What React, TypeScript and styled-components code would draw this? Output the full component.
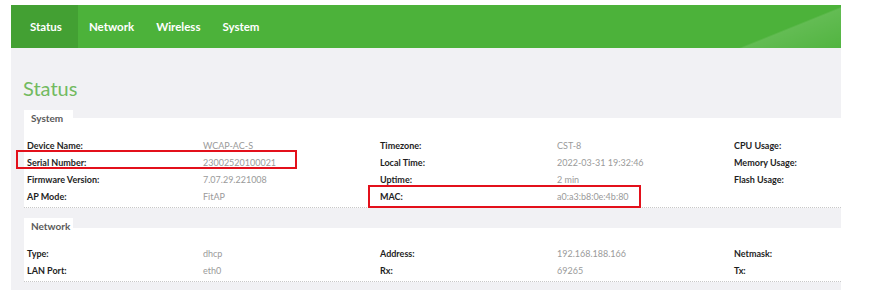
import React from "react";
import styled, { createGlobalStyle } from "styled-components";

const Global = createGlobalStyle`
  html, body { margin: 0; padding: 0; background: #ffffff; }
  body { font-family: Lato, "Open Sans", "Liberation Sans", sans-serif; }
`;

const Page = styled.div`
  position: relative;
  width: 830px;
  margin: 5px 0 0 11px;
  height: 285px;
  background: #f1f1f4;
  overflow: hidden;
`;

const Header = styled.nav`
  display: flex;
  align-items: stretch;
  height: 43px;
  background: linear-gradient(158deg, rgba(255,255,255,0) 89%, rgba(255,255,255,0.13) 89.5%, rgba(255,255,255,0.03) 100%), #4cb23a;
`;

const NavItem = styled.div<{ $active?: boolean }>`
  display: flex;
  align-items: center;
  padding-left: ${(p) => (p.$active ? "19px" : "11px")};
  padding-right: ${(p) => (p.$active ? "16px" : "11px")};
  background: ${(p) => (p.$active ? "#43a033" : "transparent")};
  color: #ffffff;
  font-size: 11.5px;
  font-weight: 700;
`;

const Content = styled.div`
  padding: 28px 0 0 13px;
`;

const Title = styled.h1`
  margin: 0 0 10px -1px;
  font-size: 20px;
  line-height: 24px;
  font-weight: 400;
  color: #72ba60;
`;

const Section = styled.section`
  margin-bottom: 10px;
`;

const SectionHead = styled.div`
  display: flex;
  height: 18px;
`;

const Tab = styled.div`
  width: 42px;
  background: #ffffff;
  padding-left: 7px;
  font-size: 10px;
  font-weight: 700;
  color: #5a5a5a;
  line-height: 17px;
`;

const Filler = styled.div<{ $cut: number }>`
  flex: 1;
  background: linear-gradient(to bottom, transparent ${(p) => p.$cut}px, #ffffff ${(p) => p.$cut}px);
`;

const Body = styled.div`
  background: #ffffff;
  padding: 9px 0 2px 3px;
  border-bottom: 1px dotted #c8c8c8;
`;

const Row = styled.div`
  display: grid;
  grid-template-columns: 176px 177px 177px 177px 177px auto;
  height: 17px;
  align-items: center;
  font-size: 9px;
  white-space: nowrap;
`;

const Label = styled.span`
  font-weight: 700;
  color: #1e1e1e;
`;

const Value = styled.span`
  color: #9a9a9a;
`;

const Mark = styled.div`
  position: absolute;
  border: 2px solid #e3101b;
  box-sizing: border-box;
  pointer-events: none;
`;

type Cell = [string, string];

const sysRows: Cell[][] = [
  [["Device Name:", "WCAP-AC-S"], ["Timezone:", "CST-8"], ["CPU Usage:", ""]],
  [["Serial Number:", "23002520100021"], ["Local Time:", "2022-03-31 19:32:46"], ["Memory Usage:", ""]],
  [["Firmware Version:", "7.07.29.221008"], ["Uptime:", "2 min"], ["Flash Usage:", ""]],
  [["AP Mode:", "FitAP"], ["MAC:", "a0:a3:b8:0e:4b:80"], ["", ""]],
];

const netRows: Cell[][] = [
  [["Type:", "dhcp"], ["Address:", "192.168.188.166"], ["Netmask:", ""]],
  [["LAN Port:", "eth0"], ["Rx:", "69265"], ["Tx:", ""]],
];

function Table({ rows }: { rows: Cell[][] }) {
  return (
    <Body>
      {rows.map((r, i) => (
        <Row key={i}>
          {r.map(([l, v], j) => (
            <React.Fragment key={j}>
              <Label>{l}</Label>
              <Value>{v}</Value>
            </React.Fragment>
          ))}
        </Row>
      ))}
    </Body>
  );
}

export default function App() {
  return (
    <>
      <Global />
      <Page>
        <Header>
          <NavItem $active>Status</NavItem>
          <NavItem>Network</NavItem>
          <NavItem>Wireless</NavItem>
          <NavItem>System</NavItem>
        </Header>
        <Content>
          <Title>Status</Title>
          <Section>
            <SectionHead>
              <Tab>System</Tab>
              <Filler $cut={8} />
            </SectionHead>
            <Table rows={sysRows} />
          </Section>
          <Section>
            <SectionHead>
              <Tab>Network</Tab>
              <Filler $cut={10} />
            </SectionHead>
            <Table rows={netRows} />
          </Section>
        </Content>
        <Mark style={{ left: 5, top: 145, width: 281, height: 19 }} />
        <Mark style={{ left: 357, top: 180, width: 273, height: 23 }} />
      </Page>
    </>
  );
}
